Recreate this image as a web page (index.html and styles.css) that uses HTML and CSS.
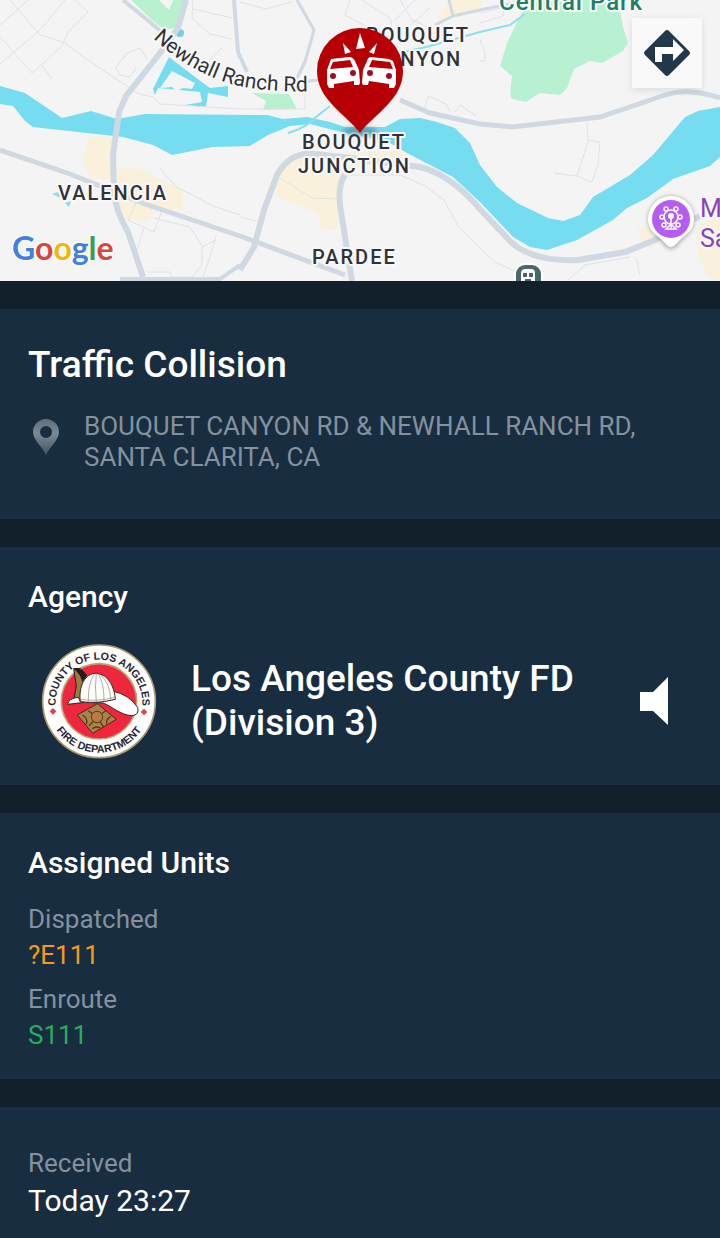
FILE: index.html
```html
<!DOCTYPE html>
<html lang="en">
<head>
    <meta charset="UTF-8">
    <meta name="viewport" content="width=device-width, initial-scale=1.0">
    <title>Traffic Collision</title>
    <link rel="stylesheet" href="styles.css">
</head>
<body>
    <div class="map">
        <svg class="map-canvas" viewBox="0 0 720 281" role="img" aria-label="Incident map">
            <defs>
                <path id="ranchRd" d="M153 38 Q188 72 235 85 Q270 93 315 91"/>
                <filter id="soft" x="-50%" y="-50%" width="200%" height="200%">
                    <feGaussianBlur stdDeviation="2"/>
                </filter>
            </defs>
            <rect width="720" height="281" fill="#f4f4f5"/>

            <!-- Built-up areas -->
            <g fill="#faf1dc">
                <path d="M89 137 L113 136 L111 180 L90 178 L83 160Z"/>
                <path d="M116 167 L140 169 L183 190 L183 209 L158 211 L144 222 L126 220 L118 200Z"/>
                <path d="M274 172 L300 156 L400 150 L407 156 L345 172 L339 190 L338 230 L321 229 L319 214 L303 207 L277 197Z"/>
                <path d="M437 23 L448 0 L482 0 L480 11 L450 17Z"/>
                <path d="M637 229 L652 228 L656 241 L642 243Z"/>
                <path d="M698 225 L720 215 L720 281 L708 276 L697 250Z"/>
            </g>

            <!-- Parks -->
            <path d="M131 0 L184 0 L178 27 L165 30 L152 20Z" fill="#b8f1cf"/>
            <path d="M159 0 L173 0 L169 10Z" fill="#f4f4f5"/>
            <path d="M252 93 L289 94 L297 109 L263 110 L266 101Z" fill="#b8f1cf"/>
            <path d="M528 0 L618 0 L623 27 L628 43 L623 51 L602 63 L590 61 L574 69 L567 88 L560 95 L540 93 L526 102 L512 99 L510 94 L512 76 L500 66 L507 43Z" fill="#b8f1d2"/>

            <!-- Water -->
            <path d="M0 86 L25 93 L62 118 L91 111 L117 119 L145 114 L267 115 L283 119 L307 117 L330 122 L345 127 L385 127 L400 119 L420 118 L437 122 L455 128 L470 143 L480 165 L497 187 L517 203 L548 218 L563 221 L580 215 L593 197 L630 175 L653 155 L685 117 L698 111 L720 107 V157 L710 166 L673 179 L647 198 L627 208 L613 220 L577 240 L547 250 L530 247 L513 237 L480 202 L453 177 L407 153 L390 143 L345 133 L310 124 L290 126 L268 135 L250 146 L213 147 L172 155 L153 145 L123 137 L33 127 L25 121 L13 106 L0 104Z" fill="#76dcef"/>
            <path d="M169 57 L199 80 L210 88 L228 86 L228 97 L208 93 L206 107 L185 105 L202 102 L200 92 L158 88 L155 95 L153 89Z" fill="#76dcef"/>
            <path d="M172 71 L195 83 L192 89 L183 88 L176 91 L172 87 L160 88Z M160 91 L197 93 L201 101 L185 104 L158 99Z" fill="#f4f4f5"/>
            <circle cx="180" cy="33" r="4" fill="#76cfe1"/>
            <path d="M52 194 L58 192 L61 198 L54 195Z M65 203 L71 201 L69 207Z" fill="#8ddce8"/>
            <g fill="none" stroke="#8ddfea" stroke-width="2">
                <path d="M288 133 Q306 128 316 117 L330 106"/>
                <path d="M403 52 L426 47 L480 32 L510 25 L525 14"/>
            </g>

            <!-- Side streets -->
            <g fill="none" stroke="#dfe2e8" stroke-width="1">
                <path d="M10 0 L40 35 L63 42 L95 65 L139 94 L153 97 L160 104 L240 109"/>
                <path d="M65 0 L40 30 L0 64 M75 0 L88 12 L68 32 L62 46 L32 73 L0 37 M0 25 L28 0 M41 64 L52 79"/>
                <path d="M147 58 L140 48 L127 53 L116 68 L120 75 L130 77 L136 68"/>
                <path d="M193 0 L192 18 L210 34 L232 39 M193 9 L232 18 M209 60 L222 48"/>
                <path d="M240 2 L266 9 L292 2 M303 60 L301 75 M305 95 V109 H240"/>
                <path d="M350 0 L345 15 L370 28 L385 30 M362 0 L390 18 L392 28 M400 0 L412 20 L430 28 M415 0 L395 20 M430 8 L405 30"/>
                <path d="M480 13 L505 7 L503 16 L480 23 M480 40 L485 52 L485 61 L480 61"/>
                <path d="M425 108 L428 96 L446 104 L450 112 M455 112 L460 105 L476 116"/>
                <path d="M587 122 L588 142 L577 176 M588 140 L600 142 L598 165 L592 182 M554 173 L577 176 L592 182"/>
                <path d="M340 175 L400 175 L425 186 L444 200 L458 226 L480 248"/>
                <path d="M240 217 L257 221 M280 178 L312 198 L337 199"/>
                <path d="M160 168 L175 186 L213 206 L240 215 M136 203 L128 220 L154 232 L162 210"/>
                <path d="M154 218 L190 227 L202 246 L202 265 L192 277 H172 L170 272 H148 M144 228 L135 256 M216 236 L209 260 L202 279 M202 247 L216 240"/>
                <path d="M480 248 L495 262 L515 271 M568 280 L585 265 L630 257 M636 258 L640 275"/>
            </g>

            <!-- Main roads -->
            <g fill="none" stroke="#d0d9e2" stroke-width="5">
                <path d="M186 0 L178 28 L160 53 L126 96 L119 112 L113 155 L114 192 Q116 212 128 232 L143 277" stroke-width="6"/>
                <path d="M123 0 L162 32" stroke-width="4"/>
                <path d="M0 150 L70 174 L145 204 L240 236 L345 275"/>
                <path d="M120 279 H220 L240 265" stroke-width="4"/>
                <path d="M240 270 L254 247 L264 210 L277 175 Q290 151 315 154 L350 158 L420 167 Q450 174 480 209 L511 242 Q533 262 578 260 L625 252 L655 240 L700 216" stroke-width="6"/>
                <path d="M345 175 Q338 183 340 205 L347 250 L352 281" stroke-width="6"/>
                <path d="M400 100 L430 113 L480 124 L512 127 L600 117 L665 95 Q688 87 720 98"/>
                <path d="M297 0 L314 30 L305 62 L295 82 M295 82 L320 80" stroke-width="3"/>
                <path d="M234 0 L238 52 L247 72" stroke-width="4"/>
                <path d="M449 0 L453 16 L480 10 L528 0 M453 16 L435 25" stroke-width="3"/>
            </g>

            <g class="map-labels">
                <text class="road-label"><textPath href="#ranchRd">Newhall Ranch Rd</textPath></text>
                <text x="366" y="42">BOUQUET</text>
                <text x="370" y="66">CANYON</text>
                <text x="302" y="149">BOUQUET</text>
                <text x="298" y="173">JUNCTION</text>
                <text x="58" y="200">VALENCIA</text>
                <text x="312" y="264">PARDEE</text>
                <text class="park-label" x="499" y="10">Central Park</text>
                <text class="poi-label" x="700" y="217">Mall</text>
                <text class="poi-label" x="700" y="247">Santa</text>
            </g>

            <!-- Incident pin -->
            <ellipse cx="360" cy="131" rx="17" ry="5" fill="#2b5560" opacity=".4" filter="url(#soft)"/>
            <path d="M360 133 C346 114 317 100 317 71 A43 43 0 0 1 403 71 C403 100 374 114 360 133Z" fill="#b60005"/>
            <g fill="#fff">
                <path d="M360 33 L365 48 L356 49Z M343 43 L351 52 L345 54Z M377 43 L374 54 L369 52Z"/>
                <path d="M331 59 L349 57 Q353 57 355 61 L359 70 L360 83 L359 85 L354 85 L354 81 L334 84 L334 88 L329 88 L327 84 L327 70Z"/>
                <path d="M389 59 L371 57 Q368 57 367 61 L363 70 L362 83 L363 85 L368 85 L369 81 L389 84 L389 88 L394 88 L396 84 L396 70 L393 61Z"/>
            </g>
            <path d="M333 62 L350 60 L353 67 L330 69Z M390 62 L372 60 L369 67 L393 69Z" fill="#b60005"/>
            <g fill="#9e1021">
                <circle cx="333" cy="76" r="3"/><circle cx="353" cy="73" r="3"/>
                <circle cx="370" cy="73" r="3"/><circle cx="389" cy="76" r="3"/>
            </g>

            <!-- Attraction pin -->
            <path d="M671 249 Q667 249 662 242 C656 236 648 231 648 219 A23 23 0 0 1 694 219 C694 231 686 236 680 242 Q675 249 671 249Z" fill="#777" opacity=".6" filter="url(#soft)"/>
            <path d="M671 247 Q668 247 663 241 C657 235 648 231 648 219 A23 23 0 0 1 694 219 C694 231 685 235 679 241 Q674 247 671 247Z" fill="#fff"/>
            <circle cx="671" cy="219" r="19" fill="#b55cf5"/>
            <g fill="none" stroke="#fff" stroke-width="1.5">
                <circle cx="671" cy="217" r="7"/>
                <g fill="#b55cf5">
                    <circle cx="666" cy="209" r="2"/><circle cx="676" cy="209" r="2"/>
                    <circle cx="662" cy="217" r="2"/><circle cx="680" cy="217" r="2"/>
                    <circle cx="664" cy="225" r="2"/><circle cx="678" cy="225" r="2"/>
                </g>
                <path d="M671 217 V228 M666 229 L671 224 L676 229Z"/>
            </g>
            <circle cx="671" cy="216" r="3" fill="#fff"/>

            <!-- Train station -->
            <rect x="514" y="263" width="29" height="32" rx="11" fill="#fff"/>
            <rect x="516" y="265" width="25" height="32" rx="9" fill="#4b666f"/>
            <path d="M521 281 V273 Q521 269 526 269 H531 Q535 269 535 273 V281Z" fill="#fff"/>
            <path d="M523 273 H527 V277 H523Z M529 273 H533 V277 H529Z M525 279 H531 V281 H525Z" fill="#4b666f"/>

            <text class="google" x="12" y="260"><tspan fill="#4180df">G</tspan><tspan fill="#d6473f">o</tspan><tspan fill="#efb60d">o</tspan><tspan fill="#4180df">g</tspan><tspan fill="#34a056">l</tspan><tspan fill="#d6473f">e</tspan></text>
        </svg>
        <button class="directions" type="button" aria-label="Directions">
            <svg viewBox="0 0 48 48" width="48" height="48">
                <path d="M22 2 Q24 0 26 2 L46 22 Q48 24 46 26 L26 46 Q24 48 22 46 L2 26 Q0 24 2 22Z" fill="#21384b"/>
                <path d="M12 33 V18 H30 V10 L41 21 L30 32 V25 H19 V33Z" fill="#fff"/>
            </svg>
        </button>
    </div>

    <main class="cards">
        <section class="card incident">
            <h1>Traffic Collision</h1>
            <div class="address">
                <svg class="address-pin" viewBox="0 0 28 36" width="28" height="36" aria-hidden="true">
                    <defs>
                        <linearGradient id="pinFade" x1="0" y1="0" x2="0" y2="1">
                            <stop offset="0" stop-color="#5f6d7b"/>
                            <stop offset=".4" stop-color="#7b8997"/>
                            <stop offset="1" stop-color="#435362"/>
                        </linearGradient>
                    </defs>
                    <path fill="url(#pinFade)" fill-rule="evenodd" d="M14 36 C10 27 1 21 1 13 A13 13 0 0 1 27 13 C27 21 18 27 14 36Z M14 7 A6 6 0 1 0 14 19 A6 6 0 1 0 14 7Z"/>
                </svg>
                <p>BOUQUET CANYON RD &amp; NEWHALL RANCH RD, SANTA CLARITA, CA</p>
            </div>
        </section>

        <section class="card agency">
            <h2>Agency</h2>
            <div class="agency-row">
                <svg class="seal" viewBox="36 36 348 348" width="116" height="116" role="img" aria-label="County of Los Angeles Fire Department">
                    <defs>
                        <path id="sealTop" d="M81 232 A130 130 0 1 1 339 232"/>
                        <path id="sealBottom" d="M56 211 A154 154 0 0 0 364 211"/>
                    </defs>
                    <circle cx="210" cy="211" r="169" fill="#fffefa" stroke="#a79b77" stroke-width="5"/>
                    <circle cx="210" cy="211" r="113" fill="#f0263f" stroke="#b9a678" stroke-width="5"/>
                    <g class="seal-text">
                        <text><textPath href="#sealTop" startOffset="50%">COUNTY OF LOS ANGELES</textPath></text>
                        <text><textPath href="#sealBottom" startOffset="50%">FIRE DEPARTMENT</textPath></text>
                    </g>
                    <path d="M72 231 L82 241 L72 251 L62 241Z M345 233 L355 243 L345 253 L335 243Z" fill="#d9435a"/>
                    <path d="M134 113 L154 112 L172 132 L160 158 L154 213 L134 208 L142 165Z" fill="#9b7b42" stroke="#241c18" stroke-width="3"/>
                    <path d="M134 113 Q157 108 173 132 L160 153 Q154 128 134 113Z" fill="#241c18"/>
                    <path d="M116 220 Q118 202 148 199 L154 212 L255 205 L253 181 Q299 190 326 229 Q332 253 307 254 C273 251 254 229 222 216 Q169 210 116 220Z" fill="#fff" stroke="#332520" stroke-width="3"/>
                    <path d="M154 212 C148 166 168 126 202 127 C242 130 257 174 259 205 Q203 219 154 212Z" fill="#fffefa" stroke="#332520" stroke-width="3"/>
                    <path d="M196 128 Q176 160 178 212 M202 127 Q197 166 202 213 M208 128 Q226 160 225 211 M213 130 Q244 156 245 208 M154 205 Q203 213 257 199" fill="none" stroke="#8d867a" stroke-width="2"/>
                    <path d="M205 218 L262 265 L191 307 L145 252Z" fill="#a98348" stroke="#452b18" stroke-width="3"/>
                    <path d="M178 239 L192 250 M230 240 L216 249 M180 284 L194 270 M224 288 L213 272 M160 252 Q178 262 172 280 M245 256 Q229 267 233 280 M190 294 Q199 284 214 291" fill="none" stroke="#5a3b1e" stroke-width="4"/>
                    <circle cx="204" cy="258" r="17" fill="#b77b43" stroke="#5a3b1e" stroke-width="3"/>
                </svg>
                <p class="agency-name">Los Angeles County FD (Division 3)</p>
                <button class="listen" type="button" aria-label="Listen">
                    <svg viewBox="0 0 28 48" width="28" height="48">
                        <path d="M0 15 H13 L28 0 V48 L13 34 H0Z" fill="#fff"/>
                    </svg>
                </button>
            </div>
        </section>

        <section class="card units">
            <h2>Assigned Units</h2>
            <dl>
                <dt>Dispatched</dt>
                <dd class="dispatched">?E111</dd>
                <dt>Enroute</dt>
                <dd class="enroute">S111</dd>
            </dl>
        </section>

        <section class="card received">
            <dl>
                <dt>Received</dt>
                <dd>Today 23:27</dd>
            </dl>
        </section>
    </main>
</body>
</html>
```
FILE: styles.css
```css
* {
    box-sizing: border-box;
}
body {
    margin: 0;
    font-family: Roboto, "Liberation Sans", sans-serif;
    background: #12202c;
    color: #fff;
}
h1, h2, p, dl, dd {
    margin: 0;
}
h1, h2 {
    font-weight: 500;
}
button {
    border: none;
    padding: 0;
    cursor: pointer;
}
svg {
    display: block;
}

/* Map */
.map {
    position: relative;
}
.map-canvas {
    width: 100%;
    height: auto;
}
.map-labels {
    font-size: 20px;
    font-weight: 500;
    letter-spacing: 2px;
    fill: #303238;
    stroke: #f8f8f8;
    stroke-width: 4px;
    stroke-linejoin: round;
    paint-order: stroke;
}
.road-label {
    font-size: 21px;
    font-weight: 400;
    letter-spacing: 0;
}
.park-label {
    font-size: 24px;
    letter-spacing: 1px;
    fill: #1c8064;
}
.poi-label {
    font-size: 25px;
    font-weight: 400;
    letter-spacing: 0;
    fill: #8544b5;
}
.google {
    font-family: Lato, sans-serif;
    font-size: 32px;
    font-weight: 700;
    stroke: #fff;
    stroke-width: 2px;
    paint-order: stroke;
}
.directions {
    position: absolute;
    top: 18px;
    right: 18px;
    display: flex;
    align-items: center;
    justify-content: center;
    width: 70px;
    height: 70px;
    background: #f9f9fa;
    box-shadow: 0 2px 8px rgba(0, 0, 0, 0.1);
}

/* Cards */
.cards {
    display: flex;
    flex-direction: column;
    gap: 28px;
    padding-top: 28px;
}
.card {
    background: #182d3f;
    padding: 32px 28px 26px;
}
h1 {
    font-size: 37px;
    line-height: 48px;
}
h2 {
    font-size: 30px;
    line-height: 36px;
}
.address {
    display: flex;
    align-items: flex-start;
    gap: 24px;
    padding: 22px 4px 20px;
    color: #84919e;
    font-size: 26px;
    line-height: 31px;
}
.address-pin {
    flex: none;
    margin-top: 8px;
}
.agency-row {
    display: flex;
    align-items: center;
    gap: 34px;
    padding: 28px 24px 0 13px;
}
.seal {
    flex: none;
}
.seal-text {
    font-family: "Liberation Sans", sans-serif;
    font-size: 32px;
    font-weight: 700;
    fill: #252637;
    text-anchor: middle;
}
.agency-name {
    flex: 1;
    font-size: 37px;
    font-weight: 500;
    line-height: 44px;
}
.listen {
    background: none;
}
dt {
    margin-top: 8px;
    color: #84919e;
    font-size: 26px;
    line-height: 36px;
}
dd {
    font-size: 26px;
    line-height: 36px;
}
.units dl {
    padding-top: 12px;
}
.dispatched {
    color: #f79a1c;
}
.enroute {
    color: #2bab5c;
}
.received {
    padding-top: 30px;
}
.received dd {
    font-size: 30px;
    line-height: 40px;
}
```
